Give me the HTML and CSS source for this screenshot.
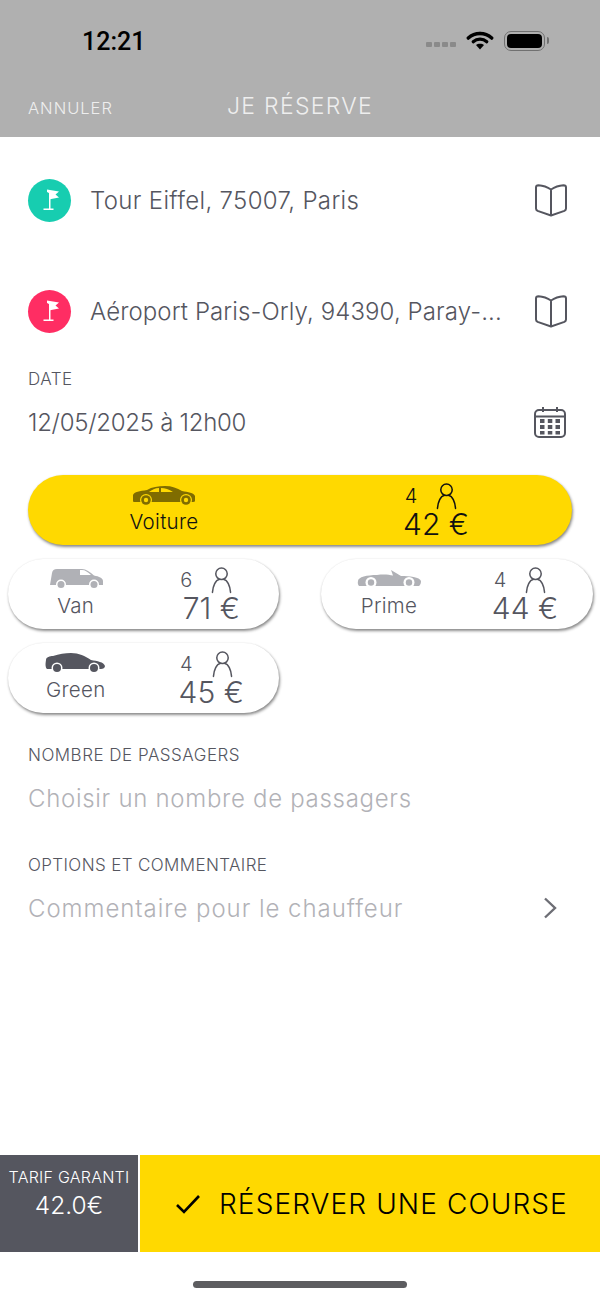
FILE: index.html
```html
<!DOCTYPE html>
<html lang="fr">
<head>
  <meta charset="UTF-8">
  <meta name="viewport" content="width=device-width, initial-scale=1.0">
  <title>Je réserve</title>
  <link rel="stylesheet" href="styles.css">
</head>
<body>
  <svg class="defs" width="0" height="0">
    <symbol id="flag" viewBox="0 0 22 22">
      <path d="M10 3h1.500v17H10z M4.500 19.500h10V21h-10z" fill="#fff"/>
      <path d="M8 .5l12 2-3.500 3 3.500 3-9 1.700V4.500L8 3z" fill="#fff"/>
    </symbol>
    <symbol id="book" viewBox="0 0 34 34">
      <path d="M17 6.500C14 4.500 9 2.600 4.500 2.300 3 2.300 2 3 2 4.500v21c0 1.200.6 1.900 1.600 2.400L17 32.500l13.400-4.600c1-.5 1.600-1.200 1.600-2.400v-21c0-1.500-1-2.200-2.500-2.200C25 2.600 20 4.500 17 6.500zM17 6.500v26" fill="none" stroke="#55565f" stroke-width="2" stroke-linejoin="round"/>
    </symbol>
    <symbol id="person" viewBox="0 0 22 28">
      <circle cx="11" cy="7.500" r="6" fill="none" stroke="currentColor" stroke-width="1.600"/>
      <path d="M1.500 27c.5-7 3.500-13 7-13.500M20.500 27c-.5-7-3.500-13-7-13.500" fill="none" stroke="currentColor" stroke-width="1.600" stroke-linecap="round"/>
    </symbol>
  </svg>

  <header class="topbar">
    <div class="status">
      <span class="time">12:21</span>
      <div class="status-icons">
        <span class="signal"><i></i><i></i><i></i><i></i></span>
        <svg class="wifi" width="28" height="20" viewBox="0 0 28 20">
          <path d="M14 3.500c4.500 0 8.600 1.700 11.700 4.600" fill="none" stroke="#000" stroke-width="3.400" stroke-linecap="round"/>
          <path d="M14 3.500C9.500 3.500 5.400 5.200 2.300 8.100" fill="none" stroke="#000" stroke-width="3.400" stroke-linecap="round"/>
          <path d="M7.200 11.700c1.800-1.600 4.200-2.600 6.800-2.600s5 1 6.800 2.600" fill="none" stroke="#000" stroke-width="3.200" stroke-linecap="round"/>
          <path d="M14 19.500l-4-4.400c1-.9 2.400-1.400 4-1.400s3 .5 4 1.400z"/>
        </svg>
        <span class="battery"><span class="battery-fill"></span></span>
      </div>
    </div>
    <div class="navbar">
      <span class="cancel">ANNULER</span>
      <span class="title">JE RÉSERVE</span>
    </div>
  </header>

  <section class="address first">
    <span class="pin green"><svg width="22" height="22"><use href="#flag"/></svg></span>
    <span class="address-text">Tour Eiffel, 75007, Paris</span>
    <svg class="book" width="34" height="34"><use href="#book"/></svg>
  </section>
  <section class="address second">
    <span class="pin red"><svg width="22" height="22"><use href="#flag"/></svg></span>
    <span class="address-text">Aéroport Paris-Orly, 94390, Paray-...</span>
    <svg class="book" width="34" height="34"><use href="#book"/></svg>
  </section>

  <section class="field date">
    <div class="label">DATE</div>
    <div class="value-row">
      <span class="value dark">12/05/2025 à 12h00</span>
      <svg class="calendar" width="34" height="32" viewBox="0 0 34 32">
        <rect x="2" y="4" width="30" height="27" rx="4" fill="none" stroke="#55565f" stroke-width="2"/>
        <path d="M2 10.500h30M10 1v5M24 1v5" stroke="#55565f" stroke-width="2"/>
        <g fill="#55565f">
          <rect x="7" y="13" width="4.500" height="4"/><rect x="14.800" y="13" width="4.500" height="4"/><rect x="22.500" y="13" width="4.500" height="4"/>
          <rect x="7" y="19" width="4.500" height="4"/><rect x="14.800" y="19" width="4.500" height="4"/><rect x="22.500" y="19" width="4.500" height="4"/>
          <rect x="7" y="25" width="4.500" height="3.500"/><rect x="14.800" y="25" width="4.500" height="3.500"/><rect x="22.500" y="25" width="4.500" height="3.500"/>
        </g>
      </svg>
    </div>
  </section>

  <section class="cars">
    <div class="car car-main selected">
      <div class="car-left">
        <svg width="64" height="20" viewBox="0 0 64 20">
          <path d="M1 10C2 7 8 6 15 5 20 2 26 1 33 1c7 0 12 2 17 5 6 1 12 2 13 5v5q0 1-2 1H2q-1 0-1-1z" fill="#7f6c00"/>
          <path d="M17 7c3-2 6-4 10-4v4zM29 3c4 0 8 1.500 12 4H29z" fill="#ffd900"/>
          <g fill="#7f6c00">
            <circle cx="14" cy="15" r="6" fill="#ffd900"/><circle cx="14" cy="15" r="4.800"/><circle cx="14" cy="15" r="2.200" fill="#ffd900"/>
            <circle cx="54" cy="15" r="6" fill="#ffd900"/><circle cx="54" cy="15" r="4.800"/><circle cx="54" cy="15" r="2.200" fill="#ffd900"/>
          </g>
        </svg>
        <span class="car-name">Voiture</span>
      </div>
      <div class="car-right">
        <div class="seats"><span>4</span><svg width="21" height="28"><use href="#person"/></svg></div>
        <div class="price">42 €</div>
      </div>
    </div>

    <div class="car">
      <div class="car-left">
        <svg width="54" height="20" viewBox="0 0 54 20">
          <path d="M1 16l2-12C3.500 1.500 5 0 8 0h25c4 0 8 3 12 6.500 5 1 9 2.500 9 5.500v4z" fill="#b0b1b6"/>
          <path d="M31 1h2c3 0 6 2 9 5H31z" fill="#fff"/>
          <g fill="#b0b1b6">
            <circle cx="12" cy="15.500" r="5" fill="#fff"/><circle cx="12" cy="15.500" r="3.500"/>
            <circle cx="45" cy="15.500" r="5" fill="#fff"/><circle cx="45" cy="15.500" r="3.500"/>
          </g>
        </svg>
        <span class="car-name">Van</span>
      </div>
      <div class="car-right">
        <div class="seats"><span>6</span><svg width="21" height="28"><use href="#person"/></svg></div>
        <div class="price">71 €</div>
      </div>
    </div>

    <div class="car">
      <div class="car-left">
        <svg width="65" height="20" viewBox="0 0 65 20">
          <path d="M1 12C1 8 10 6 20 6c8-1 12 0 16 .5L34 1l10 6c8 0 19 1 20 5 0 3-1 4-2 5H2c-1-1-1.500-3-1-5z" fill="#b0b1b6"/>
          <g fill="#b0b1b6">
            <circle cx="14" cy="13.500" r="5.500" fill="#fff"/><circle cx="14" cy="13.500" r="3.200"/>
            <circle cx="52" cy="13.500" r="5.500" fill="#fff"/><circle cx="52" cy="13.500" r="3.200"/>
          </g>
        </svg>
        <span class="car-name">Prime</span>
      </div>
      <div class="car-right">
        <div class="seats"><span>4</span><svg width="21" height="28"><use href="#person"/></svg></div>
        <div class="price">44 €</div>
      </div>
    </div>

    <div class="car">
      <div class="car-left">
        <svg width="61" height="20" viewBox="0 0 61 20">
          <path d="M1 7c0-3 4-4 7-4 6-2 12-3 18-3 8 0 14 3 20 7 6 1 13 2 14 6 0 2-2 3-4 3H2C0 14 .5 10 1 7z" fill="#55565f"/>
          <g fill="#55565f">
            <circle cx="12" cy="15" r="5.500" fill="#fff"/><circle cx="12" cy="15" r="4"/>
            <circle cx="49" cy="15" r="5.500" fill="#fff"/><circle cx="49" cy="15" r="4"/>
          </g>
        </svg>
        <span class="car-name">Green</span>
      </div>
      <div class="car-right">
        <div class="seats"><span>4</span><svg width="21" height="28"><use href="#person"/></svg></div>
        <div class="price">45 €</div>
      </div>
    </div>
  </section>

  <section class="field passengers">
    <div class="label">NOMBRE DE PASSAGERS</div>
    <div class="value-row"><span class="value">Choisir un nombre de passagers</span></div>
  </section>
  <section class="field options">
    <div class="label">OPTIONS ET COMMENTAIRE</div>
    <div class="value-row">
      <span class="value">Commentaire pour le chauffeur</span>
      <svg class="chevron" width="14" height="22" viewBox="0 0 14 22"><path d="M2 1.500l10 9.500-10 9.500" fill="none" stroke="#6d6e75" stroke-width="2.400"/></svg>
    </div>
  </section>

  <div class="spacer"></div>

  <footer class="footer">
    <div class="tarif">
      <span class="tarif-label">TARIF GARANTI</span>
      <span class="tarif-price">42.0€</span>
    </div>
    <div class="book-btn">
      <svg width="26" height="20" viewBox="0 0 26 20"><path d="M2 11l7 7L24 2" fill="none" stroke="#000" stroke-width="2.600"/></svg>
      <span>RÉSERVER UNE COURSE</span>
    </div>
  </footer>
  <div class="home"><span class="home-bar"></span></div>
</body>
</html>
```

FILE: styles.css
```css
*{
  box-sizing: border-box;
}
html, body{
  height: 100%;
}
body{
  margin: 0;
  height: 1300px;
  display: flex;
  flex-direction: column;
  background: #fff;
  color: #55565f;
  font-family: "Inter", "Liberation Sans", sans-serif;
  font-weight: 300;
  overflow: hidden;
}
.defs{
  position: absolute;
}

/* top */
.topbar{
  height: 137px;
  flex: none;
  background: #b0b0b0;
}
.status{
  height: 82px;
  display: flex;
  justify-content: space-between;
  align-items: center;
  padding: 0 55px 0 82px;
}
.time{
  font-family: "Roboto", sans-serif;
  font-size: 25px;
  font-weight: 500;
  color: #000;
}
.status-icons{
  display: flex;
  align-items: center;
  gap: 10px;
}
.signal{
  display: flex;
  gap: 2px;
  margin-top: 7px;
}
.signal i{
  width: 6px;
  height: 5px;
  border-radius: 1px;
  background: #8a8a8a;
}
.wifi{
  margin-top: -2px;
}
.battery{
  width: 41px;
  height: 20px;
  padding: 2px;
  border: 1.500px solid #707070;
  border-radius: 7px;
  position: relative;
}
.battery::after{
  content: "";
  position: absolute;
  right: -5px;
  top: 5px;
  width: 2px;
  height: 7px;
  background: #707070;
  border-radius: 0 2px 2px 0;
}
.battery-fill{
  display: block;
  height: 100%;
  background: #000;
  border-radius: 4px;
}
.navbar{
  height: 48px;
  display: flex;
  align-items: center;
  padding-left: 28px;
  color: #eee;
}
.cancel{
  width: 199px;
  font-size: 16.500px;
  letter-spacing: 1px;
  padding-top: 3px;
}
.title{
  font-size: 23px;
  letter-spacing: 1.300px;
}

/* addresses */
.address{
  display: flex;
  align-items: center;
  padding: 0 32px 0 28px;
  flex: none;
}
.address.first{
  height: 126px;
}
.address.second{
  height: 96px;
}
.pin{
  width: 43px;
  height: 43px;
  border-radius: 50%;
  display: flex;
  align-items: center;
  justify-content: center;
  flex: none;
}
.green{
  background: #17cdb0;
}
.red{
  background: #ff2d63;
}
.address-text{
  flex: 1;
  margin-left: 19px;
  font-size: 24px;
  letter-spacing: .1px;
  white-space: nowrap;
}
.first .address-text{
  letter-spacing: .33px;
}

/* fields */
.field{
  padding: 0 28px;
  flex: none;
}
.label{
  font-size: 17px;
  letter-spacing: .5px;
  line-height: 20px;
}
.value-row{
  display: flex;
  justify-content: space-between;
  align-items: center;
  margin-top: 17px;
  height: 32px;
}
.value{
  font-size: 24px;
  letter-spacing: .7px;
  color: #b2b2b7;
  white-space: nowrap;
}
.value.dark{
  color: #55565f;
  letter-spacing: -.28px;
}
.date{
  margin-top: 10px;
}
.calendar{
  margin-right: 5px;
}
.chevron{
  margin-right: 15px;
}
.passengers{
  margin-top: 32px;
}
.options{
  margin-top: 41px;
}
.options .label{
  letter-spacing: .38px;
}
.options .value{
  letter-spacing: .95px;
}
.options .value-row{
  margin-top: 17px;
}

/* vehicles */
.cars{
  margin-top: 37px;
  padding: 0 7px 0 8px;
  display: grid;
  grid-template-columns: 271px 272px;
  justify-content: space-between;
  row-gap: 14px;
  flex: none;
}
.car{
  height: 70px;
  border-radius: 35px;
  background: #fff;
  box-shadow: 1px 2px 3px rgba(0, 0, 0, .45), 0 0 2px rgba(0, 0, 0, .08);
  display: grid;
  grid-template-columns: 1fr 1fr;
  align-items: center;
}
.car-main{
  grid-column: 1 / 3;
  margin: 0 21px 0 20px;
}
.selected{
  background: #ffd900;
  color: #111;
}
.car-left{
  display: flex;
  flex-direction: column;
  align-items: center;
  gap: 6px;
  margin-top: -3px;
}
.car-left svg{
  display: block;
}
.car-name{
  font-size: 20.500px;
  letter-spacing: .3px;
  line-height: 22px;
}
.car-right{
  display: flex;
  flex-direction: column;
  align-items: center;
}
.seats{
  display: flex;
  align-items: center;
  gap: 19px;
  font-size: 20px;
  height: 29px;
  margin-right: 10px;
}
.price{
  font-size: 30px;
  line-height: 30px;
  margin-top: -2px;
}

.spacer{
  flex: 1;
}

/* bottom */
.footer{
  height: 97px;
  flex: none;
  display: flex;
  gap: 2px;
}
.tarif{
  width: 138px;
  background: #55565f;
  color: #fff;
  display: flex;
  flex-direction: column;
  align-items: center;
  padding-top: 12px;
}
.tarif-label{
  font-size: 16px;
  letter-spacing: .25px;
  white-space: nowrap;
}
.tarif-price{
  font-size: 24.500px;
  margin-top: 3px;
}
.book-btn{
  flex: 1;
  background: #ffd900;
  color: #000;
  display: flex;
  align-items: center;
  padding-left: 35px;
  gap: 18px;
  font-size: 28px;
  letter-spacing: 1.100px;
  white-space: nowrap;
}
.home{
  height: 48px;
  flex: none;
  display: flex;
  justify-content: center;
  padding-top: 29px;
}
.home-bar{
  width: 214px;
  height: 7px;
  border-radius: 4px;
  background: #5d5d60;
}
```
